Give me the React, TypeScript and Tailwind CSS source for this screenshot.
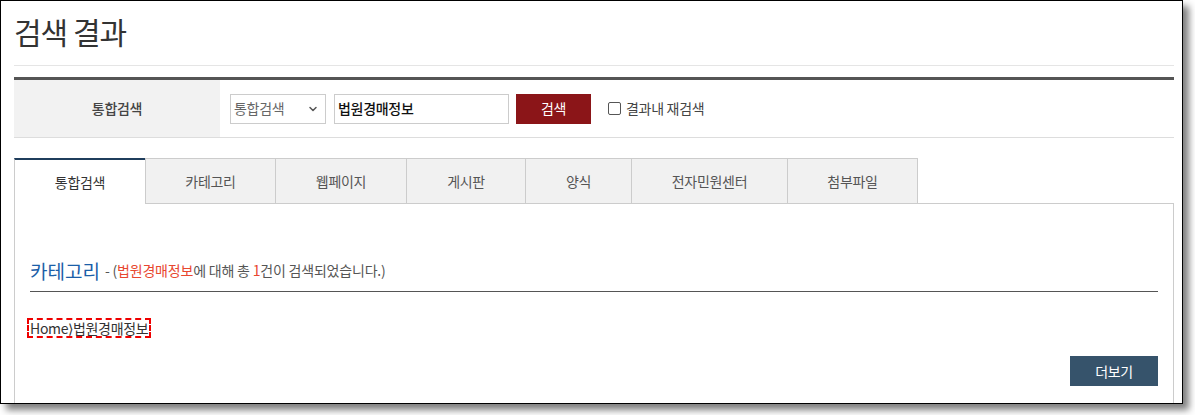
import { ChevronDown } from "lucide-react";

const tabs = [
  { label: "통합검색", w: "w-[131px]" },
  { label: "카테고리", w: "w-[130px]" },
  { label: "웹페이지", w: "w-[131px]" },
  { label: "게시판", w: "w-[119px]" },
  { label: "양식", w: "w-[106px]" },
  { label: "전자민원센터", w: "w-[156px]" },
  { label: "첨부파일", w: "w-[131px]" },
];

export default function App() {
  return (
    <div className="w-[1195px] h-[415px] bg-white overflow-hidden font-['Noto_Sans_CJK_KR','Liberation_Sans',sans-serif] text-[#333]">
      <div className="w-[1183px] h-[404px] bg-white border border-black overflow-hidden shadow-[6px_6px_7px_rgba(0,0,0,0.5)] pl-[13px] pr-[8px]">
        {/* 제목 */}
        <div className="h-[65px] pt-[11px] border-b border-[#e5e5e5]">
          <h1 className="text-[30px] leading-[38px] tracking-[-1px] text-[#333]">검색 결과</h1>
        </div>

        {/* 검색 영역 */}
        <div className="mt-[11px] border-t-[3px] border-[#555] border-b border-b-[#ddd] flex h-[61px]">
          <div className="w-[206px] bg-[#f2f2f2] flex items-center justify-center text-[14px] tracking-[-0.3px] font-medium text-[#444]">
            통합검색
          </div>
          <div className="flex items-center pl-[10px]">
            <div className="w-[96px] h-[30px] border border-[#ccc] flex items-center justify-between pl-[3px] pr-[6px] text-[14px] tracking-[-0.3px] text-[#666]">
              <span>통합검색</span>
              <ChevronDown size={12} strokeWidth={3} className="text-[#555]" />
            </div>
            <div className="ml-[8px] w-[175px] h-[30px] border border-[#ccc] flex items-center pl-[3px] text-[14px] tracking-[-0.3px] text-[#111] font-medium">
              법원경매정보
            </div>
            <button className="ml-[7px] w-[75px] h-[30px] bg-[#8b1518] text-white text-[14px] tracking-[-0.3px]">
              검색
            </button>
            <label className="ml-[17px] flex items-center gap-[5px] text-[14px] tracking-[-0.3px] text-[#444]">
              <span className="w-[13px] h-[13px] border border-[#555] rounded-[2px] bg-white" />
              결과내 재검색
            </label>
          </div>
        </div>

        {/* 탭 */}
        <div className="mt-[20px] flex h-[46px]">
          {tabs.map((t, i) =>
            i === 0 ? (
              <div
                key={t.label}
                className={`${t.w} bg-white border-t-2 border-t-[#1f3d5c] border-l border-l-[#ccc] flex items-center justify-center text-[14px] tracking-[-0.3px] text-[#333]`}
              >
                {t.label}
              </div>
            ) : (
              <div
                key={t.label}
                className={`${t.w} bg-[#f1f1f1] border-t border-l border-b border-[#ccc] ${
                  i === tabs.length - 1 ? "border-r" : ""
                } flex items-center justify-center text-[14px] tracking-[-0.3px] text-[#555]`}
              >
                {t.label}
              </div>
            )
          )}
          <div className="flex-1 border-b border-[#ccc]" />
        </div>

        {/* 결과 */}
        <div className="border-l border-r border-[#ccc] px-[15px] pt-[53px] h-[300px]">
          <div className="border-b border-[#555] pb-[7px] flex items-center h-[35px]">
            <span className="text-[19px] leading-[28px] text-[#1b5ea8]">카테고리</span>
            <span className="ml-[5px] text-[14px] tracking-[-0.2px] text-[#555]">
              - (<span className="text-[#e8472f]">법원경매정보</span>에 대해 총{" "}
              <span className="text-[#e8472f]">1</span>건이 검색되었습니다.)
            </span>
          </div>
          <div className="mt-[23px] h-[16px]">
            <a className="inline-block h-[16px] leading-[16px] text-[14px] tracking-[-0.3px] text-[#333] outline-2 outline-dashed outline-[#e00] ml-[-1px] px-[1px]">
              Home⟩법원경매정보
            </a>
          </div>
          <div className="mt-[25px] flex justify-end">
            <button className="w-[88px] h-[30px] bg-[#36536b] text-white text-[14px] tracking-[-0.3px]">
              더보기
            </button>
          </div>
        </div>
      </div>
    </div>
  );
}
